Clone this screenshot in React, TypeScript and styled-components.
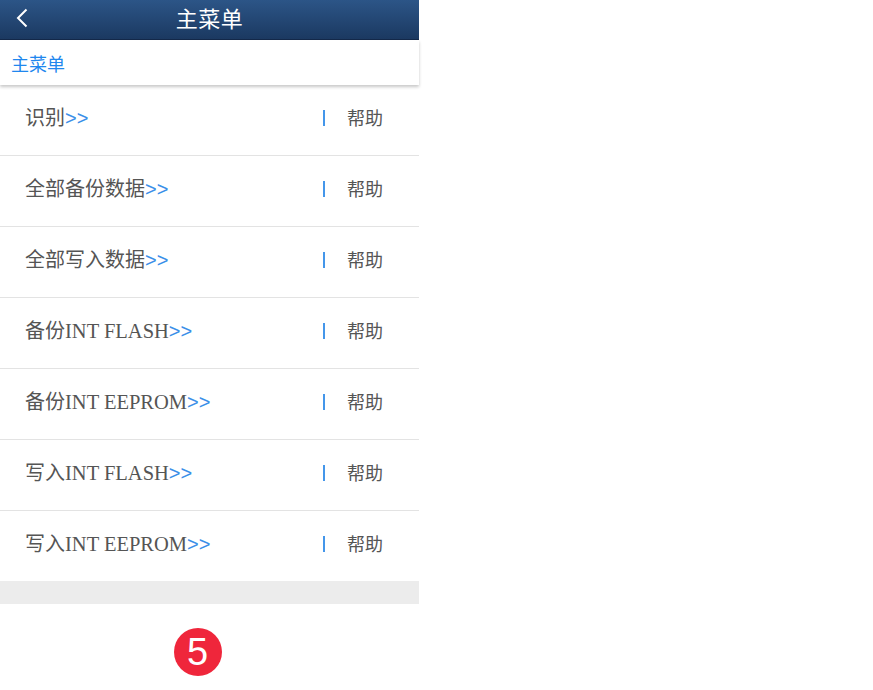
import styled, { createGlobalStyle } from 'styled-components';

const GlobalStyle = createGlobalStyle`
  html, body {
    margin: 0;
    padding: 0;
    background: #ffffff;
  }
  body {
    font-family: "Noto Sans CJK SC", "Liberation Sans", sans-serif;
  }
`;

const Phone = styled.div`
  width: 419px;
  display: flex;
  flex-direction: column;
  background: #ffffff;
`;

const TitleBar = styled.header`
  height: 39px;
  position: relative;
  display: flex;
  align-items: center;
  justify-content: center;
  background: linear-gradient(to bottom, #2c5587, #1b3961);
  border-bottom: 1px solid #14294a;
`;

const BackButton = styled.button`
  position: absolute;
  left: 13px;
  top: 7px;
  width: 18px;
  height: 22px;
  padding: 0;
  border: none;
  background: none;
  display: flex;
  align-items: center;
  justify-content: center;
`;

const Title = styled.h1`
  margin: -6px 0 0 0;
  font-size: 22px;
  font-weight: 400;
  color: #ffffff;
  letter-spacing: 0.5px;
`;

const Breadcrumb = styled.div`
  height: 45px;
  display: flex;
  align-items: center;
  padding-left: 11px;
  font-size: 18px;
  color: #1f87ee;
  position: relative;
  z-index: 1;
  box-shadow: 0 2px 3px rgba(0, 0, 0, 0.22);
`;

const MenuList = styled.ul`
  list-style: none;
  margin: 0;
  padding: 0;
`;

const MenuRow = styled.li`
  height: 70px;
  border-bottom: 1px solid #e3e3e3;
  display: flex;
  align-items: center;
  padding: 0 36px 0 25px;
  &:last-child {
    border-bottom: none;
  }
`;

const Label = styled.span`
  flex: 1;
  font-size: 20px;
  color: #555555;
  margin-top: -7px;
  white-space: nowrap;
`;

const Latin = styled.span`
  font-family: "Liberation Serif", serif;
  font-size: 20.5px;
`;

const Arrow = styled.span`
  font-family: "Liberation Sans", sans-serif;
  font-size: 20px;
  color: #3b8fe8;
`;

const Divider = styled.span`
  width: 2px;
  height: 16px;
  background: #4496ea;
  margin-right: 22px;
  margin-top: -4px;
`;

const Help = styled.span`
  font-size: 18px;
  color: #555555;
  margin-top: -6px;
`;

const GrayStrip = styled.div`
  height: 23px;
  background: #ececec;
`;

const Footer = styled.div`
  height: 85px;
  display: flex;
  align-items: flex-start;
  justify-content: center;
  padding: 24px 24px 0 0;
  box-sizing: border-box;
`;

const StepBadge = styled.div`
  width: 48px;
  height: 48px;
  border-radius: 50%;
  background: #ef263b;
  color: #ffffff;
  display: flex;
  align-items: center;
  justify-content: center;
  font-family: "Liberation Sans", sans-serif;
  font-size: 38px;
  line-height: 1;
`;

const items = [
  { cjk: '识别', latin: '' },
  { cjk: '全部备份数据', latin: '' },
  { cjk: '全部写入数据', latin: '' },
  { cjk: '备份', latin: 'INT FLASH' },
  { cjk: '备份', latin: 'INT EEPROM' },
  { cjk: '写入', latin: 'INT FLASH' },
  { cjk: '写入', latin: 'INT EEPROM' },
];

export default function App() {
  return (
    <>
      <GlobalStyle />
      <Phone>
        <TitleBar>
          <BackButton aria-label="返回">
            <svg width="14" height="20" viewBox="0 0 14 20">
              <path d="M11.5 1.5 L3 10 L11.5 18.5" fill="none" stroke="#ffffff" strokeWidth="2" />
            </svg>
          </BackButton>
          <Title>主菜单</Title>
        </TitleBar>
        <Breadcrumb>主菜单</Breadcrumb>
        <MenuList>
          {items.map(item => (
            <MenuRow key={item.cjk + item.latin}>
              <Label>
                {item.cjk}
                {item.latin && <Latin>{item.latin}</Latin>}
                <Arrow>&gt;&gt;</Arrow>
              </Label>
              <Divider />
              <Help>帮助</Help>
            </MenuRow>
          ))}
        </MenuList>
        <GrayStrip />
        <Footer>
          <StepBadge>5</StepBadge>
        </Footer>
      </Phone>
    </>
  );
}
